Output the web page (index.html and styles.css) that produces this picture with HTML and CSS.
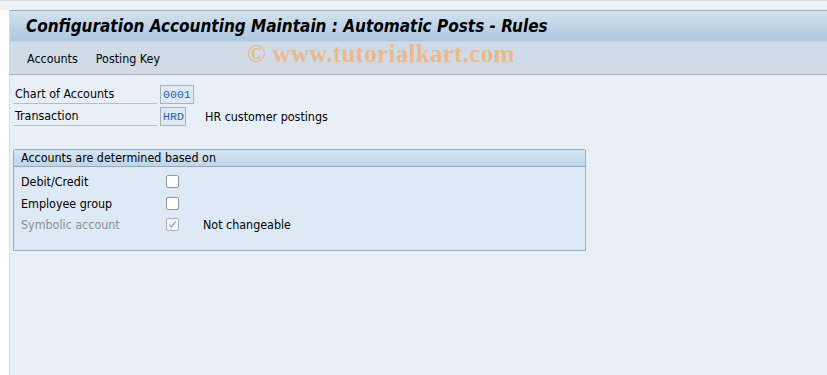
FILE: index.html
```html
<!DOCTYPE html>
<html>
<head>
<meta charset="utf-8">
<link rel="stylesheet" href="styles.css">
</head>
<body>
<div class="topstrip"></div>
<div class="window">
  <div class="titlebar">Configuration Accounting Maintain : Automatic Posts - Rules</div>
  <div class="menubar">
    <span class="menu">Accounts</span>
    <span class="menu">Posting Key</span>
    <span class="watermark">© www.tutorialkart.com</span>
  </div>
  <div class="content">
    <div class="fieldrow">
      <span class="label">Chart of Accounts</span>
      <span class="input w4">0001</span>
    </div>
    <div class="fieldrow">
      <span class="label">Transaction</span>
      <span class="input w3">HRD</span>
      <span class="desc">HR customer postings</span>
    </div>
    <div class="group">
      <div class="grouphead">Accounts are determined based on</div>
      <div class="groupbody">
        <div class="cbrow"><span class="cblabel">Debit/Credit</span><span class="cb"></span></div>
        <div class="cbrow"><span class="cblabel">Employee group</span><span class="cb"></span></div>
        <div class="cbrow"><span class="cblabel disabled">Symbolic account</span><span class="cb checked"><svg width="11" height="11" viewBox="0 0 11 11"><path d="M2.5 5.8 L4.6 8 L8.6 2.6" fill="none" stroke="#9aa4ae" stroke-width="1.3"/></svg></span><span class="cbdesc">Not changeable</span></div>
      </div>
    </div>
  </div>
</div>
</body>
</html>
```

FILE: styles.css
```css
html, body {
  margin: 0;
  padding: 0;
  width: 827px;
  height: 375px;
  overflow: hidden;
  background: #ffffff;
  font-family: Tahoma, "DejaVu Sans Condensed", "Liberation Sans", sans-serif;
  font-size: 12px;
  color: #000;
}
.topstrip {
  height: 9px;
  border-top: 1px solid #d8dbe0;
  background: linear-gradient(#f4f5f8, #eceff4);
}
.window {
  margin-left: 9px;
  border-left: 1px solid #d5dce5;
  height: 366px;
  display: flex;
  flex-direction: column;
}
.titlebar {
  height: 30px;
  border-top: 1px solid #9aabbe;
  background: linear-gradient(#d3e2ef, #aec7df);
  font-family: "DejaVu Sans Condensed", "DejaVu Sans", sans-serif;
  font-weight: bold;
  font-style: italic;
  font-size: 17px;
  line-height: 30px;
  padding-left: 16px;
  border-bottom: 1px solid #c2d2e2;
}
.menubar {
  height: 32px;
  background: #cfdce8;
  border-bottom: 1px solid #a3b3c4;
  display: flex;
  align-items: center;
  padding-left: 17px;
  gap: 18px;
  position: relative;
}
.menu {
  font-size: 12.4px;
  font-family: "DejaVu Sans Condensed", "DejaVu Sans", sans-serif;
}
.watermark {
  position: absolute;
  left: 237px;
  top: -2px;
  font-family: "Liberation Serif", serif;
  font-weight: bold;
  font-size: 25px;
  color: #ebb98c;
  letter-spacing: 0.3px;
}
.content {
  flex: 1;
  background: #e8eff7;
  padding: 10px 0 0 3px;
  font-family: "DejaVu Sans Condensed", "DejaVu Sans", sans-serif;
  font-size: 12.4px;
}
.fieldrow {
  display: flex;
  align-items: center;
  height: 19px;
  margin-bottom: 3px;
}
.label {
  width: 142px;
  padding-left: 2px;
  height: 18px;
  line-height: 18px;
  border-bottom: 1px solid #b5bec8;
  margin-right: 3px;
}
.input {
  height: 17px;
  line-height: 17px;
  border: 1px solid #a8b2bd;
  background: #dfe9f4;
  color: #2266aa;
  font-family: "Liberation Mono", monospace;
  font-size: 11.6px;
  padding-left: 2px;
  box-sizing: content-box;
}
.w4 { width: 30px; }
.w3 { width: 22px; }
.desc {
  margin-left: 19px;
}
.group {
  margin-top: 23px;
  width: 571px;
  border: 1px solid #8fabc8;
  border-radius: 2px 2px 0 0;
  background: #dde9f4;
}
.grouphead {
  height: 16px;
  line-height: 16px;
  padding-left: 7px;
  background: linear-gradient(#d6e5f1, #bed5e8);
  border-bottom: 1px solid #8fabc8;
}
.groupbody {
  padding: 4px 0 14px 7px;
}
.cbrow {
  display: flex;
  align-items: center;
  height: 21.5px;
}
.cblabel {
  width: 145px;
}
.disabled {
  color: #8a9099;
}
.cb {
  width: 11px;
  height: 11px;
  border: 1px solid #8c959e;
  border-radius: 2px;
  background: #fff;
  display: flex;
}
.cb.checked {
  background: #f2f5f8;
  border-color: #a9b1ba;
}
.cbdesc {
  margin-left: 24px;
}
```
